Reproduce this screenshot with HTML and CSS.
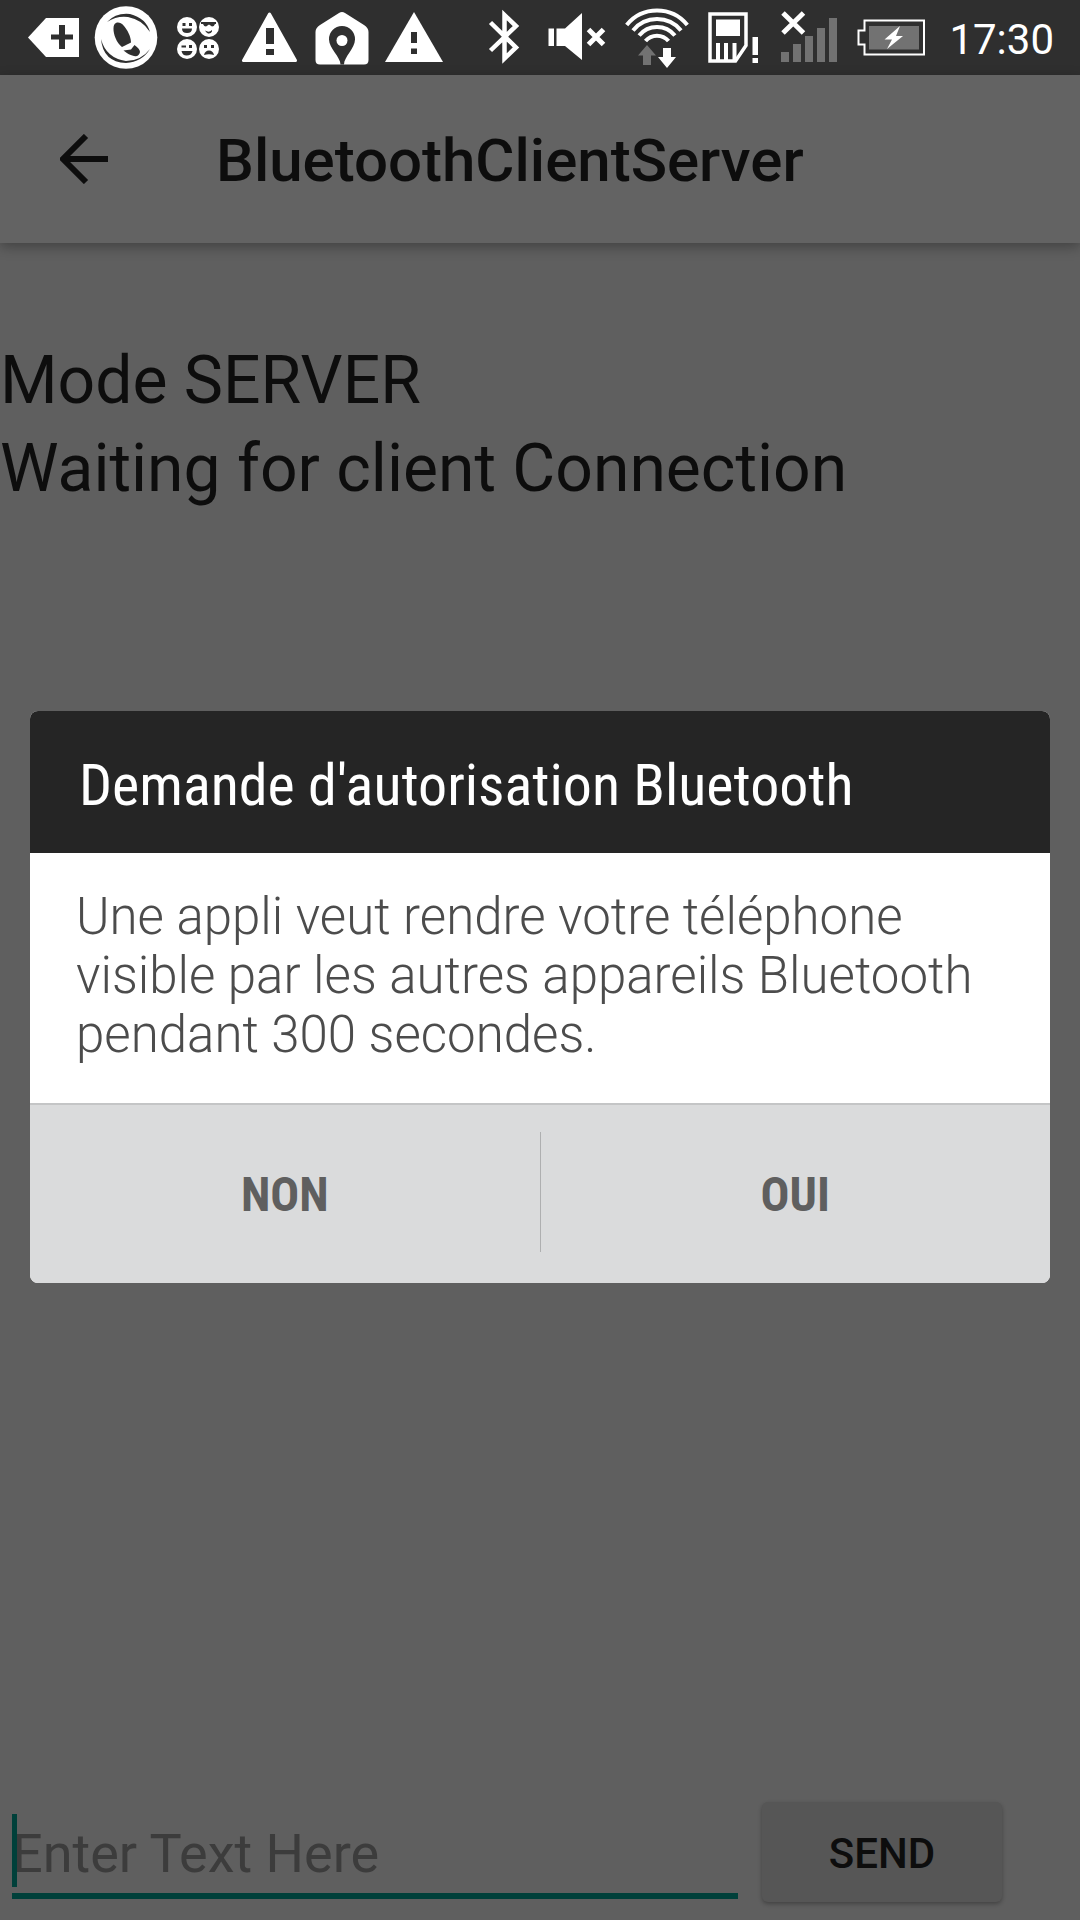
FILE: index.html
```html
<!DOCTYPE html>
<html lang="fr">
<head>
<meta charset="utf-8">
<meta name="viewport" content="width=device-width, initial-scale=1">
<title>BluetoothClientServer</title>
<link rel="stylesheet" href="styles.css">
</head>
<body>
<div class="screen">
  <div class="status-bar">
    <div class="status-group">
      <svg class="status-icon" width="72" height="75" viewBox="18 0 72 75" aria-hidden="true">
        <path class="ink" d="M28 37.500 46 18H79V57H46Z"/>
        <path class="cut" d="M59 25h6v9.500h8v5h-8V49h-6v-9.500h-8v-5h8z"/>
      </svg>
      <svg class="status-icon" width="72" height="75" viewBox="90 0 72 75" aria-hidden="true">
        <circle class="ink" cx="126" cy="37.500" r="31.300"/>
        <path class="cut" d="M107 22Q116 12.500 130 14Q146 18 150 32Q142 19.500 128 17Q117 15.500 107 22Z"/>
        <path class="cut" d="M101 39Q103 62 126 63Q142 62 150 49Q141 61 126 61Q106 58 101 39Z"/>
        <path class="cut" d="M116 23C112.500 24 113 32 115.500 38C117 42 120 45.500 122 47L131 42.500C131 36 127 29.500 124 26C121 22.500 118 22 116 23Z"/>
        <path class="cut" d="M123.500 50.500 131 49.500 134.500 45Q140 49 140 52Q139 57 134 56Q129 55 123.500 50.500Z"/>
      </svg>
      <svg class="status-icon" width="72" height="75" viewBox="162 0 72 75" aria-hidden="true">
        <g class="ink"><circle cx="187" cy="27" r="10"/><circle cx="209" cy="27" r="10"/><circle cx="187" cy="49" r="10"/><circle cx="209" cy="49" r="10"/></g>
        <g class="cut">
          <path d="M182.500 23h3v3h-3zM189 23h3v3h-3zM182 28.500h10q0 4.500-5 4.500t-5-4.500z"/>
          <path d="M201 22h15v2h-1q-1 2.500-3 2.500l-3-2-3 2q-2 0-3-2.500h-2zM205 30.500q4 2.500 7-.5v1.500q-1 2.500-4 2-2-1-3-3z"/>
          <path d="M181.500 45.500h4.500v2h-4.500zM189 45h3v3h-3zM181.500 51h11q-1 4.500-6 4.500-4 0-5-4.500z"/>
          <path d="M204 45h3v3h-3zM211 45h3v3h-3zM204 55q1-4.500 5-4.500t5 4.500q-5-1.500-10 0z"/>
        </g>
      </svg>
      <svg class="status-icon" width="72" height="75" viewBox="234 0 72 75" aria-hidden="true">
        <path class="ink rounded" d="M269.500 14 243.500 60.500H295.500Z"/>
        <path class="cut" d="M266 28h8v16h-8zM266 49h8v6h-8z"/>
      </svg>
      <svg class="status-icon" width="72" height="75" viewBox="306 0 72 75" aria-hidden="true">
        <path class="ink" d="M339 13Q342 11 345 13L364 25Q368.500 28 368.500 32V60Q368.500 64.500 364 64.500H320Q315.500 64.500 315.500 60V32Q315.500 28 320 25Z"/>
        <path class="cut" d="M342 26a13 13 0 0 1 13 13.500C355 48 344 57 344 64.500h-3.500C340.500 57 329 48 329 39.500A13 13 0 0 1 342 26Z"/>
        <circle class="ink" cx="342" cy="40.500" r="5.500"/>
      </svg>
      <svg class="status-icon" width="72" height="75" viewBox="378 0 72 75" aria-hidden="true">
        <path class="ink" d="M414 12 385 62H443Z"/>
        <path class="cut" d="M411 32h6v11h-6zM411 48.500h6v5.500h-6z"/>
      </svg>
    </div>
    <div class="status-group">
      <svg class="status-icon" width="72" height="75" viewBox="468 0 72 75" aria-hidden="true">
        <path class="line" stroke-width="4.500" d="M490.500 22.500 516 47.500 504.500 58.500V15L516 26 490.500 50.500"/>
      </svg>
      <svg class="status-icon" width="72" height="75" viewBox="540 0 72 75" aria-hidden="true">
        <path class="ink" d="M548.500 28.500h5.500V46h-5.500zM556.500 28.500H565L582 13V60L565 46h-8.500z"/>
        <path class="line" stroke-width="5" d="M588.500 29.500 603.500 44.500M603.500 29.500 588.500 44.500"/>
      </svg>
      <svg class="status-icon" width="84" height="75" viewBox="612 0 84 75" aria-hidden="true">
        <path class="line" stroke-width="4" d="M626.700 25A39 39 0 0 1 687.300 25M633 30.500A31 31 0 0 1 681 30.500M639.100 35.500A23 23 0 0 1 674.900 35.500M645.500 41A15 15 0 0 1 668.500 41"/>
        <path class="dim" d="M647 45 656 55.500H651V65H643V55.500H638Z"/>
        <path class="ink" d="M663 48h8v9h5L667 68 658 57h5z"/>
      </svg>
      <svg class="status-icon" width="74" height="75" viewBox="696 0 74 75" aria-hidden="true">
        <path class="line" stroke-width="3.500" d="M710 14H746V45.500L735.500 61H710Z"/>
        <path class="ink" d="M716 19.500h24V36h-24zM716 43h4v17h-4zM724 43h4v17h-4zM732.500 43h4v17h-4zM752.500 37h5.500v18h-5.500zM752.500 58h5.500v5h-5.500z"/>
      </svg>
      <svg class="status-icon" width="76" height="75" viewBox="770 0 76 75" aria-hidden="true">
        <path class="dim" d="M781 52h8v10h-8zM793 44h8v18h-8zM805 36h8v26h-8zM817 28h8v34h-8zM829 18h8v44h-8z"/>
        <path class="line" stroke-width="5" d="M783 13 803.500 33M803.500 13 783 33"/>
      </svg>
      <svg class="status-icon" width="103" height="75" viewBox="846 0 103 75" aria-hidden="true">
        <path class="line" stroke-width="2" d="M864.500 20.500H924V54.500H864.500V44.500H858.500V30.500H864.500Z"/>
        <path class="dim" d="M869 26h50v23.500h-50z"/>
        <path class="ink" d="M900 26 884.500 39.500H892L887 49 903 36H896Z"/>
      </svg>
      <time class="clock">17:30</time>
    </div>
  </div>

  <header class="app-bar">
    <button class="back" type="button" aria-label="Retour">
      <svg width="48" height="50" viewBox="0 0 48 50" aria-hidden="true"><path d="M48 25H5M26 2 3 25 26 48" fill="none" stroke="#0d0d0d" stroke-width="6"/></svg>
    </button>
    <h1 class="app-title">BluetoothClientServer</h1>
  </header>

  <main class="content">
    <p class="mode">Mode SERVER<br>Waiting for client Connection</p>
    <form class="composer">
      <div class="field">
        <input class="message" type="text" placeholder="Enter Text Here" aria-label="Enter Text Here">
        <span class="caret"></span>
      </div>
      <button class="send" type="button">SEND</button>
    </form>
  </main>

  <div class="overlay">
    <section class="dialog" role="alertdialog" aria-labelledby="dialog-title" aria-describedby="dialog-text">
      <h2 class="dialog-title" id="dialog-title">Demande d'autorisation Bluetooth</h2>
      <p class="dialog-text" id="dialog-text">Une appli veut rendre votre téléphone visible par les autres appareils Bluetooth pendant 300 secondes.</p>
      <div class="dialog-actions">
        <button class="action" type="button">NON</button>
        <span class="divider"></span>
        <button class="action" type="button">OUI</button>
      </div>
    </section>
  </div>
</div>
</body>
</html>
```
FILE: styles.css
```css
* {
  box-sizing: border-box;
}

body {
  margin: 0;
  background: #5f5f5f;
  color: #0d0d0d;
  font-family: Roboto, "Liberation Sans", sans-serif;
}

h1, h2, p {
  margin: 0;
}

button, input {
  border: 0;
  padding: 0;
  background: none;
  color: inherit;
  font-family: inherit;
}

.screen {
  position: relative;
  display: flex;
  flex-direction: column;
  min-height: 100vh;
}

/* Status bar */
.status-bar {
  display: flex;
  justify-content: space-between;
  padding: 0 26px 0 18px;
  background: #2f2f2f;
}

.status-group {
  display: flex;
  align-items: center;
}

.status-icon {
  display: block;
}

.ink { fill: #fff; }
.cut { fill: #2f2f2f; }
.dim { fill: #727272; }
.line { fill: none; stroke: #fff; }
.rounded { stroke: #fff; stroke-width: 3; stroke-linejoin: round; }

.clock {
  padding-top: 4px;
  color: #fff;
  font-size: 42px;
  line-height: 48px;
}

/* App bar */
.app-bar {
  display: flex;
  align-items: center;
  gap: 108px;
  height: 168px;
  padding: 0 60px;
  background: #636363;
  box-shadow: 0 4px 12px rgba(0, 0, 0, 0.3);
}

.back {
  display: flex;
}

.app-title {
  padding-top: 4px;
  font-size: 60px;
  font-weight: 500;
  line-height: 72px;
}

/* Main area */
.content {
  flex: 1;
  display: flex;
  flex-direction: column;
  justify-content: space-between;
  padding-top: 94px;
}

.mode {
  font-size: 66px;
  line-height: 88px;
}

.composer {
  display: flex;
  align-items: flex-start;
  gap: 24px;
  padding: 0 78px 18px 12px;
}

.field {
  position: relative;
  flex: 1;
  padding-top: 12px;
}

.message {
  display: block;
  width: 100%;
  height: 85px;
  border-bottom: 6px solid #00403a;
  border-radius: 0;
  font-size: 54px;
  outline: none;
}

.message::placeholder {
  color: #3c3c3c;
  opacity: 1;
}

.caret {
  position: absolute;
  top: 12px;
  left: 0;
  width: 5px;
  height: 73px;
  background: #00403a;
}

.send {
  width: 240px;
  height: 100px;
  padding-top: 2px;
  border-radius: 6px;
  background: #565656;
  box-shadow: 0 2px 4px rgba(0, 0, 0, 0.3);
  font-size: 42px;
  font-weight: 500;
}

/* Permission dialog */
.overlay {
  position: absolute;
  inset: 75px 0 0;
  display: flex;
  align-items: center;
  padding: 0 30px 1px;
}

.dialog {
  flex: 1;
  overflow: hidden;
  border-radius: 8px;
  background: #fff;
}

.dialog-title {
  padding: 38px 49px 32px;
  background: #252525;
  color: #fff;
  font-family: "Roboto Condensed", Roboto, "Liberation Sans", sans-serif;
  font-size: 58px;
  font-weight: 400;
  line-height: 72px;
}

.dialog-text {
  padding: 34px 46px 39px;
  color: #4c4c4c;
  font-size: 51px;
  font-weight: 300;
  line-height: 59px;
}

.dialog-actions {
  display: flex;
  align-items: flex-start;
  height: 180px;
  border-top: 2px solid #c4c5c6;
  background: #dadbdc;
}

.action {
  flex: 1;
  align-self: stretch;
  color: #5f5f5f;
  font-family: "Roboto Condensed", Roboto, "Liberation Sans", sans-serif;
  font-size: 48px;
  font-weight: 700;
}

.divider {
  width: 1px;
  height: 120px;
  margin-top: 27px;
  background: #aeafb0;
}
```
